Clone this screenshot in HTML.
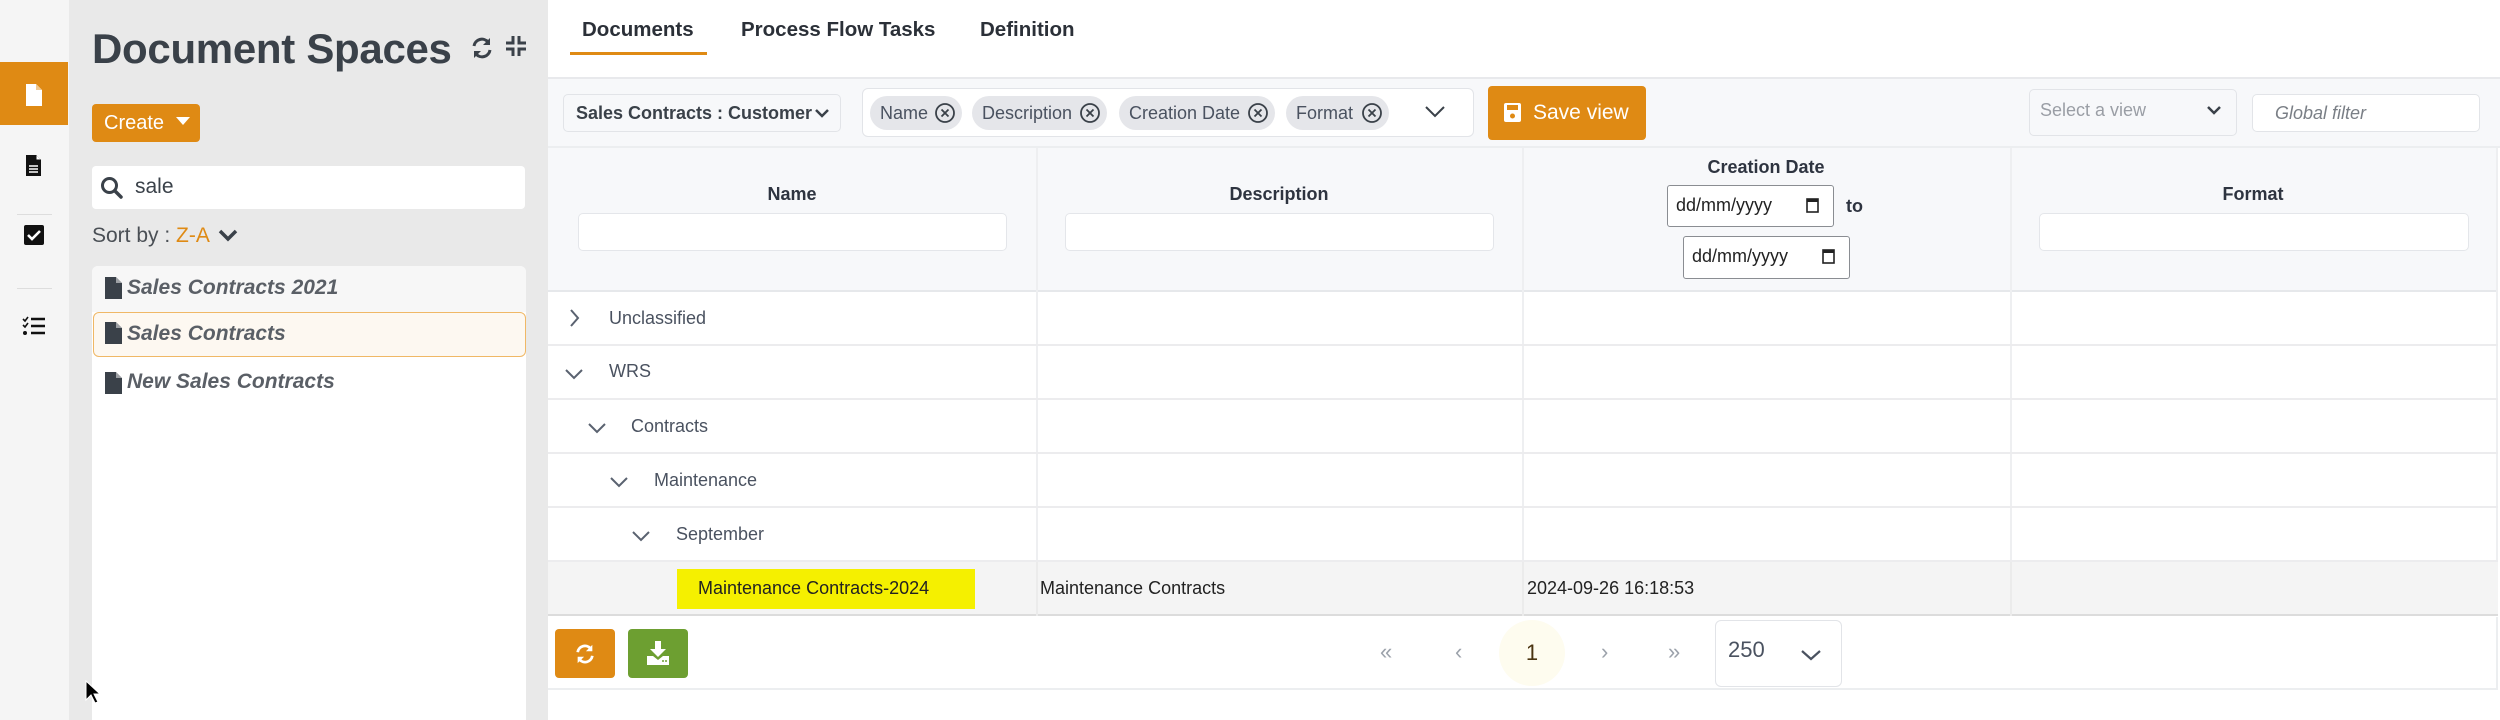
<!DOCTYPE html>
<html><head><meta charset="utf-8">
<style>
*{box-sizing:border-box;margin:0;padding:0}
body{width:2500px;height:720px;overflow:hidden;background:#fff;font-family:"Liberation Sans",sans-serif;position:relative;color:#3a4149}
.a{position:absolute}
.ic{position:absolute}
.row{position:absolute;left:548px;width:1950px;height:54px;border-bottom:2px solid #ececee}
.t{position:absolute;font-size:18px;color:#4a5260;line-height:20px}
.chev{position:absolute;width:20px;height:20px}
.fin{position:absolute;background:#fff;border:1px solid #e4e6ea;border-radius:5px}
.chip{position:absolute;top:96px;height:34px;background:#e5e6ea;border-radius:17px;font-size:18px;color:#4a5260;line-height:34px;padding-left:10px}
.chip svg{position:absolute;right:6px;top:6px}
.date{position:absolute;background:#fff;border:1.5px solid #8a8d92;border-radius:3px;font-size:18px;color:#222;line-height:38px;padding-left:8px}
</style></head><body>

<!-- icon rail -->
<div class="a" style="left:0;top:0;width:69px;height:720px;background:#f5f5f5"></div>
<div class="a" style="left:0;top:62px;width:68px;height:63px;background:#df8a14"></div>
<svg class="ic" style="left:25px;top:83px" width="18" height="24" viewBox="0 0 18 24"><path d="M1 1h10l6 6v16H1z" fill="#fff"/><path d="M11 1v6h6" fill="#f0c890"/></svg>
<svg class="ic" style="left:25px;top:154px" width="17" height="23" viewBox="0 0 17 23"><path d="M1 1h10l5 5v16H1z" fill="#111"/><path d="M11 1v5h5" fill="#fff" stroke="#111"/><path d="M4 12h9M4 15h9M4 18h9" stroke="#fff" stroke-width="1.5"/></svg>
<div class="a" style="left:17px;top:214px;width:35px;height:1px;background:#ddd"></div>
<svg class="ic" style="left:24px;top:225px" width="20" height="20" viewBox="0 0 20 20"><rect x="0" y="0" width="20" height="20" rx="2" fill="#111"/><path d="M4 10l4 4 8-8" stroke="#fff" stroke-width="2.6" fill="none"/></svg>
<div class="a" style="left:17px;top:288px;width:35px;height:1px;background:#ddd"></div>
<svg class="ic" style="left:22px;top:316px" width="24" height="20" viewBox="0 0 24 20"><path d="M1 3l2 2 3-4M1 9l2 2 3-4" stroke="#111" stroke-width="1.6" fill="none"/><circle cx="3" cy="17" r="2" fill="#111"/><path d="M9 3h14M9 10h14M9 17h14" stroke="#111" stroke-width="2.5"/></svg>

<!-- sidebar -->
<div class="a" style="left:69px;top:0;width:479px;height:720px;background:#e9e9e9"></div>
<div class="a" style="left:92px;top:21px;font-size:42px;font-weight:bold;color:#3a4149;line-height:56px;letter-spacing:-0.3px">Document Spaces</div>
<svg class="ic" style="left:470px;top:36px" width="24" height="24" viewBox="0 0 24 24"><path d="M4 10a8 8 0 0 1 14-4" stroke="#3a4149" stroke-width="3" fill="none"/><path d="M20 2v7h-7z" fill="#3a4149"/><path d="M20 14a8 8 0 0 1-14 4" stroke="#3a4149" stroke-width="3" fill="none"/><path d="M4 22v-7h7z" fill="#3a4149"/></svg>
<svg class="ic" style="left:506px;top:36px" width="20" height="20" viewBox="0 0 20 20"><path d="M7 0v7H0M13 0v7h7M7 20v-7H0M13 20v-7h7" stroke="#3a4149" stroke-width="3" fill="none"/></svg>
<div class="a" style="left:92px;top:104px;width:108px;height:38px;background:#df8a14;border-radius:4px;color:#fff;font-size:20px;line-height:38px;padding-left:12px">Create</div>
<svg class="ic" style="left:176px;top:117px" width="14" height="9" viewBox="0 0 14 9"><path d="M0 0h14L7 8z" fill="#fff"/></svg>
<div class="a" style="left:92px;top:166px;width:433px;height:43px;background:#fff;border-radius:4px"></div>
<svg class="ic" style="left:100px;top:176px" width="24" height="24" viewBox="0 0 24 24"><circle cx="9.5" cy="9.5" r="7" stroke="#3a4149" stroke-width="3" fill="none"/><path d="M15 15l6 6" stroke="#3a4149" stroke-width="3.5" stroke-linecap="round"/></svg>
<div class="a" style="left:135px;top:174px;font-size:21px;color:#3a4149;line-height:26px">sale</div>
<div class="a" style="left:92px;top:223px;font-size:21px;color:#4a4f55;line-height:26px">Sort by : <span style="color:#df8a14">Z-A</span></div>
<svg class="ic" style="left:218px;top:229px" width="20" height="14" viewBox="0 0 20 14"><path d="M2 2l8 8 8-8" stroke="#3a4149" stroke-width="3.5" fill="none"/></svg>
<div class="a" style="left:92px;top:266px;width:434px;height:454px;background:#fff;border-radius:6px 6px 0 0"></div>
<div class="a" style="left:92px;top:266px;width:434px;height:46px;background:#f7f7f7;border-radius:6px 6px 0 0"></div>
<div class="a" style="left:93px;top:312px;width:433px;height:45px;background:#fdf8f1;border:1.5px solid #f0b866;border-radius:6px"></div>
<svg class="ic" style="left:105px;top:277px" width="17" height="22" viewBox="0 0 17 22"><path d="M0 0h11l6 6v16H0z" fill="#3a4149"/><path d="M11 0v6h6" fill="#fff" opacity=".5"/></svg>
<svg class="ic" style="left:105px;top:322px" width="17" height="22" viewBox="0 0 17 22"><path d="M0 0h11l6 6v16H0z" fill="#3a4149"/><path d="M11 0v6h6" fill="#fff" opacity=".5"/></svg>
<svg class="ic" style="left:105px;top:372px" width="17" height="22" viewBox="0 0 17 22"><path d="M0 0h11l6 6v16H0z" fill="#3a4149"/><path d="M11 0v6h6" fill="#fff" opacity=".5"/></svg>
<div class="a" style="left:127px;top:276px;font-size:21px;font-weight:bold;font-style:italic;color:#5a5f66;line-height:24px">Sales Contracts 2021</div>
<div class="a" style="left:127px;top:322px;font-size:21px;font-weight:bold;font-style:italic;color:#5a5f66;line-height:24px">Sales Contracts</div>
<div class="a" style="left:127px;top:370px;font-size:21px;font-weight:bold;font-style:italic;color:#5a5f66;line-height:24px">New Sales Contracts</div>
<svg class="ic" style="left:85px;top:680px" width="16" height="24" viewBox="0 0 16 24"><path d="M1 1v19l5-5 4 8 3-1-4-8h6z" fill="#000" stroke="#fff" stroke-width="1"/></svg>

<!-- tabs -->
<div class="a" style="left:582px;top:18px;font-size:20.5px;font-weight:bold;color:#2b3038">Documents</div>
<div class="a" style="left:741px;top:18px;font-size:20.5px;font-weight:bold;color:#2b3038">Process Flow Tasks</div>
<div class="a" style="left:980px;top:18px;font-size:20.5px;font-weight:bold;color:#2b3038">Definition</div>
<div class="a" style="left:570px;top:52px;width:137px;height:3px;background:#df8a14"></div>
<div class="a" style="left:548px;top:77px;width:1952px;height:2px;background:#e8e9ec"></div>

<!-- toolbar -->
<div class="a" style="left:548px;top:79px;width:1952px;height:69px;background:#f7f8fa;border-bottom:2px solid #eceef0"></div>
<div class="a" style="left:563px;top:94px;width:278px;height:38px;background:#f7f8fa;border:1px solid #e2e4e8;border-radius:5px;font-size:18px;font-weight:bold;color:#3a4149;line-height:36px;padding-left:12px;white-space:nowrap;overflow:hidden">Sales Contracts : Customer</div>
<svg class="ic" style="left:814px;top:108px" width="16" height="11" viewBox="0 0 16 11"><path d="M2 2l6 6 6-6" stroke="#3a4149" stroke-width="2.5" fill="none"/></svg>
<div class="a" style="left:862px;top:88px;width:612px;height:49px;background:#fff;border:1px solid #e2e4e8;border-radius:6px"></div>
<div class="chip" style="left:870px;width:92px">Name<svg width="22" height="22" viewBox="0 0 22 22"><circle cx="11" cy="11" r="9" stroke="#3a4149" stroke-width="1.8" fill="none"/><path d="M7.5 7.5l7 7M14.5 7.5l-7 7" stroke="#3a4149" stroke-width="1.8"/></svg></div>
<div class="chip" style="left:972px;width:135px">Description<svg width="22" height="22" viewBox="0 0 22 22"><circle cx="11" cy="11" r="9" stroke="#3a4149" stroke-width="1.8" fill="none"/><path d="M7.5 7.5l7 7M14.5 7.5l-7 7" stroke="#3a4149" stroke-width="1.8"/></svg></div>
<div class="chip" style="left:1119px;width:156px">Creation Date<svg width="22" height="22" viewBox="0 0 22 22"><circle cx="11" cy="11" r="9" stroke="#3a4149" stroke-width="1.8" fill="none"/><path d="M7.5 7.5l7 7M14.5 7.5l-7 7" stroke="#3a4149" stroke-width="1.8"/></svg></div>
<div class="chip" style="left:1286px;width:103px">Format<svg width="22" height="22" viewBox="0 0 22 22"><circle cx="11" cy="11" r="9" stroke="#3a4149" stroke-width="1.8" fill="none"/><path d="M7.5 7.5l7 7M14.5 7.5l-7 7" stroke="#3a4149" stroke-width="1.8"/></svg></div>
<svg class="ic" style="left:1424px;top:104px" width="22" height="16" viewBox="0 0 22 16"><path d="M2 3l9 9 9-9" stroke="#3a4149" stroke-width="2" fill="none"/></svg>
<div class="a" style="left:1488px;top:86px;width:158px;height:54px;background:#df8a14;border-radius:4px;color:#fff;font-size:21px;line-height:54px;padding-left:45px">Save view</div>
<svg class="ic" style="left:1504px;top:103px" width="17" height="19" viewBox="0 0 17 19"><rect x="0" y="0" width="17" height="19" rx="2" fill="#fff"/><rect x="3" y="2" width="11" height="5" fill="#df8a14"/><circle cx="8.5" cy="13" r="2.5" fill="#df8a14"/></svg>
<div class="a" style="left:2029px;top:89px;width:208px;height:47px;background:#f7f8fa;border:1px solid #e2e4e8;border-radius:5px;font-size:18px;color:#9a9ea5;line-height:40px;padding-left:10px">Select a view</div>
<svg class="ic" style="left:2206px;top:105px" width="16" height="11" viewBox="0 0 16 11"><path d="M2 2l6 6 6-6" stroke="#3a4149" stroke-width="2.5" fill="none"/></svg>
<div class="a" style="left:2252px;top:94px;width:228px;height:38px;background:#fff;border:1px solid #e2e4e8;border-radius:5px;font-size:18px;font-style:italic;color:#7a7f86;line-height:36px;padding-left:22px">Global filter</div>

<!-- table header -->
<div class="a" style="left:548px;top:148px;width:1950px;height:144px;background:#f7f8fa;border-bottom:2px solid #e6e8eb"></div>
<div class="a" style="left:1036px;top:148px;width:2px;height:468px;background:#eeeff1"></div>
<div class="a" style="left:1522px;top:148px;width:2px;height:468px;background:#eeeff1"></div>
<div class="a" style="left:2010px;top:148px;width:2px;height:468px;background:#eeeff1"></div>
<div class="a" style="left:2496px;top:148px;width:2px;height:468px;background:#eeeff1"></div>
<div class="a" style="left:548px;top:184px;width:488px;text-align:center;font-size:18px;font-weight:bold;color:#2e3440">Name</div>
<div class="a" style="left:1036px;top:184px;width:486px;text-align:center;font-size:18px;font-weight:bold;color:#2e3440">Description</div>
<div class="a" style="left:1522px;top:157px;width:488px;text-align:center;font-size:18px;font-weight:bold;color:#2e3440">Creation Date</div>
<div class="a" style="left:2010px;top:184px;width:486px;text-align:center;font-size:18px;font-weight:bold;color:#2e3440">Format</div>
<div class="fin" style="left:578px;top:213px;width:429px;height:38px"></div>
<div class="fin" style="left:1065px;top:213px;width:429px;height:38px"></div>
<div class="fin" style="left:2039px;top:213px;width:430px;height:38px"></div>
<div class="date" style="left:1667px;top:185px;width:167px;height:42px">dd/mm/yyyy</div>
<div class="date" style="left:1683px;top:236px;width:167px;height:43px">dd/mm/yyyy</div>
<svg class="ic" style="left:1806px;top:197px" width="13" height="16" viewBox="0 0 13 16"><rect x="1" y="2" width="11" height="13" stroke="#222" stroke-width="1.6" fill="none"/><rect x="1" y="2" width="11" height="3" fill="#222"/></svg>
<svg class="ic" style="left:1822px;top:248px" width="13" height="16" viewBox="0 0 13 16"><rect x="1" y="2" width="11" height="13" stroke="#222" stroke-width="1.6" fill="none"/><rect x="1" y="2" width="11" height="3" fill="#222"/></svg>
<div class="a" style="left:1846px;top:196px;font-size:18px;font-weight:bold;color:#2e3440">to</div>

<!-- rows -->
<div class="row" style="top:292px"></div>
<div class="row" style="top:346px"></div>
<div class="row" style="top:400px"></div>
<div class="row" style="top:454px"></div>
<div class="row" style="top:508px"></div>
<div class="a" style="left:548px;top:562px;width:1950px;height:54px;background:#f4f4f4;border-bottom:2px solid #dcdcdc"></div>
<div class="a" style="left:1036px;top:562px;width:2px;height:54px;background:#ebebeb"></div>
<div class="a" style="left:1522px;top:562px;width:2px;height:54px;background:#ebebeb"></div>
<div class="a" style="left:2010px;top:562px;width:2px;height:54px;background:#ebebeb"></div>

<svg class="chev" style="left:564px;top:308px" viewBox="0 0 20 20"><path d="M7 2l7 8-7 8" stroke="#5a6270" stroke-width="2" fill="none"/></svg>
<div class="t" style="left:609px;top:308px">Unclassified</div>
<svg class="chev" style="left:564px;top:364px" viewBox="0 0 20 20"><path d="M2 6l8 8 8-8" stroke="#5a6270" stroke-width="2" fill="none"/></svg>
<div class="t" style="left:609px;top:361px">WRS</div>
<svg class="chev" style="left:587px;top:418px" viewBox="0 0 20 20"><path d="M2 6l8 8 8-8" stroke="#5a6270" stroke-width="2" fill="none"/></svg>
<div class="t" style="left:631px;top:416px">Contracts</div>
<svg class="chev" style="left:609px;top:472px" viewBox="0 0 20 20"><path d="M2 6l8 8 8-8" stroke="#5a6270" stroke-width="2" fill="none"/></svg>
<div class="t" style="left:654px;top:470px">Maintenance</div>
<svg class="chev" style="left:631px;top:526px" viewBox="0 0 20 20"><path d="M2 6l8 8 8-8" stroke="#5a6270" stroke-width="2" fill="none"/></svg>
<div class="t" style="left:676px;top:524px">September</div>
<div class="a" style="left:677px;top:569px;width:298px;height:40px;background:#f5f000"></div>
<div class="t" style="left:698px;top:578px;color:#222">Maintenance Contracts-2024</div>
<div class="t" style="left:1040px;top:578px;color:#222">Maintenance Contracts</div>
<div class="t" style="left:1527px;top:578px;color:#222">2024-09-26 16:18:53</div>

<!-- footer -->
<div class="a" style="left:548px;top:617px;width:1950px;height:73px;background:#fff;border-bottom:2px solid #eceef0;border-right:2px solid #eceef0"></div>
<div class="a" style="left:555px;top:629px;width:60px;height:49px;background:#df8a14;border-radius:4px"></div>
<svg class="ic" style="left:574px;top:643px" width="22" height="22" viewBox="0 0 24 24"><path d="M4 10a8 8 0 0 1 14-4" stroke="#fff" stroke-width="3" fill="none"/><path d="M20 2v7h-7z" fill="#fff"/><path d="M20 14a8 8 0 0 1-14 4" stroke="#fff" stroke-width="3" fill="none"/><path d="M4 22v-7h7z" fill="#fff"/></svg>
<div class="a" style="left:628px;top:629px;width:60px;height:49px;background:#6d9f31;border-radius:4px"></div>
<svg class="ic" style="left:647px;top:641px" width="22" height="24" viewBox="0 0 22 24"><path d="M8 0h6v8h5l-8 8-8-8h5z" fill="#fff"/><path d="M0 15h6l5 4 5-4h6v9H0z" fill="#fff"/><path d="M15 20h2M18 20h2" stroke="#6d9f31" stroke-width="1.4"/></svg>
<div class="a" style="left:1380px;top:639px;font-size:22px;color:#9ca2ab">«</div>
<div class="a" style="left:1455px;top:639px;font-size:22px;color:#9ca2ab">‹</div>
<div class="a" style="left:1499px;top:620px;width:66px;height:66px;border-radius:50%;background:#fefcef"></div>
<div class="a" style="left:1499px;top:640px;width:66px;text-align:center;font-size:22px;color:#4a3410">1</div>
<div class="a" style="left:1601px;top:639px;font-size:22px;color:#9ca2ab">›</div>
<div class="a" style="left:1668px;top:639px;font-size:22px;color:#9ca2ab">»</div>
<div class="a" style="left:1715px;top:620px;width:127px;height:67px;border:1px solid #e2e4e8;border-radius:6px;font-size:22px;color:#4a5260;padding:16px 0 0 12px">250</div>
<svg class="ic" style="left:1800px;top:648px" width="22" height="14" viewBox="0 0 22 14"><path d="M2 3l9 8 9-8" stroke="#4a5260" stroke-width="2.2" fill="none"/></svg>
</body></html>
